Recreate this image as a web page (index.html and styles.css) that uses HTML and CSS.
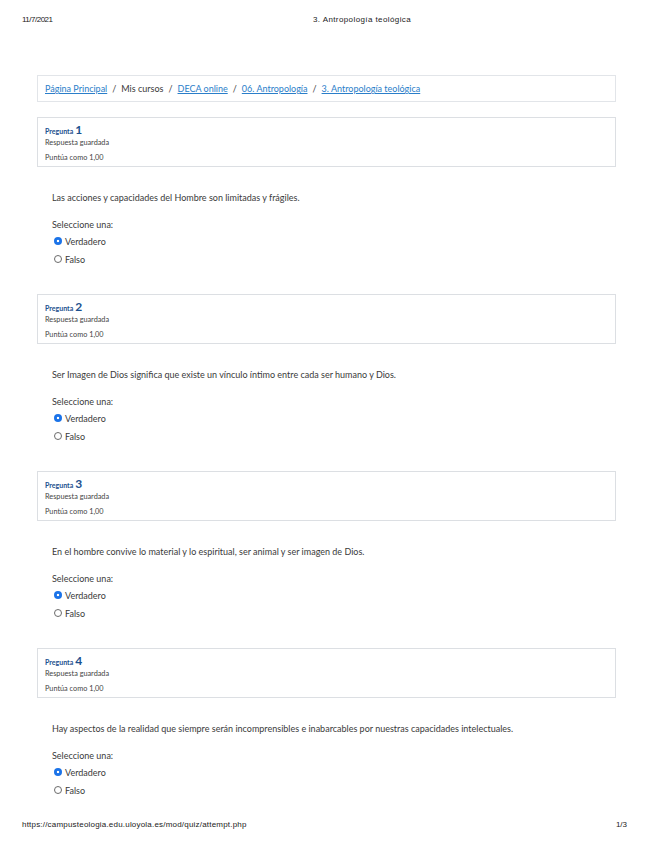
FILE: index.html
```html
<!DOCTYPE html>
<html lang="es">
<head>
<meta charset="utf-8">
<title>3. Antropología teológica</title>
<link rel="stylesheet" href="styles.css">
</head>
<body>
<header class="print-head">
  <span class="print-date">11/7/2021</span>
  <span class="print-title">3. Antropología teológica</span>
</header>

<main class="page">
  <nav class="breadcrumb">
    <a href="#">Página Principal</a><span class="sep">/</span>
    <span>Mis cursos</span><span class="sep">/</span>
    <a href="#">DECA online</a><span class="sep">/</span>
    <a href="#">06. Antropología</a><span class="sep">/</span>
    <a href="#">3. Antropología teológica</a>
  </nav>

  <section class="que">
    <div class="info">
      <div class="qno"><span class="qlabel">Pregunta</span><span class="qnum">1</span></div>
      <div class="state">Respuesta guardada</div>
      <div class="grade">Puntúa como 1,00</div>
    </div>
    <div class="content">
      <p class="qtext">Las acciones y capacidades del Hombre son limitadas y frágiles.</p>
      <p class="prompt">Seleccione una:</p>
      <div class="opt"><span class="radio checked"></span>Verdadero</div>
      <div class="opt"><span class="radio"></span>Falso</div>
    </div>
  </section>

  <section class="que">
    <div class="info">
      <div class="qno"><span class="qlabel">Pregunta</span><span class="qnum">2</span></div>
      <div class="state">Respuesta guardada</div>
      <div class="grade">Puntúa como 1,00</div>
    </div>
    <div class="content">
      <p class="qtext">Ser Imagen de Dios significa que existe un vínculo íntimo entre cada ser humano y Dios.</p>
      <p class="prompt">Seleccione una:</p>
      <div class="opt"><span class="radio checked"></span>Verdadero</div>
      <div class="opt"><span class="radio"></span>Falso</div>
    </div>
  </section>

  <section class="que">
    <div class="info">
      <div class="qno"><span class="qlabel">Pregunta</span><span class="qnum">3</span></div>
      <div class="state">Respuesta guardada</div>
      <div class="grade">Puntúa como 1,00</div>
    </div>
    <div class="content">
      <p class="qtext">En el hombre convive lo material y lo espiritual, ser animal y ser imagen de Dios.</p>
      <p class="prompt">Seleccione una:</p>
      <div class="opt"><span class="radio checked"></span>Verdadero</div>
      <div class="opt"><span class="radio"></span>Falso</div>
    </div>
  </section>

  <section class="que">
    <div class="info">
      <div class="qno"><span class="qlabel">Pregunta</span><span class="qnum">4</span></div>
      <div class="state">Respuesta guardada</div>
      <div class="grade">Puntúa como 1,00</div>
    </div>
    <div class="content">
      <p class="qtext">Hay aspectos de la realidad que siempre serán incomprensibles e inabarcables por nuestras capacidades intelectuales.</p>
      <p class="prompt">Seleccione una:</p>
      <div class="opt"><span class="radio checked"></span>Verdadero</div>
      <div class="opt"><span class="radio"></span>Falso</div>
    </div>
  </section>
</main>

<footer class="print-foot">
  <span class="print-url">https://campusteologia.edu.uloyola.es/mod/quiz/attempt.php</span>
  <span class="print-page">1/3</span>
</footer>
</body>
</html>
```

FILE: styles.css
```css
html, body {
  margin: 0;
  padding: 0;
  background: #fff;
}

body {
  width: 655px;
  height: 848px;
  position: relative;
  overflow: hidden;
  font-family: Lato, "Open Sans", sans-serif;
  color: #3a3a3a;
}

.print-head {
  display: flex;
  height: 40px;
  padding: 14px 0 0 22px;
  box-sizing: border-box;
  font-family: "Liberation Sans Narrow", "Liberation Sans", Arial, sans-serif;
  font-size: 8px;
  line-height: 12px;
  color: #222;
}

.print-date {
  width: 291px;
  letter-spacing: -0.5px;
}

.print-title {
  letter-spacing: 0.4px;
}

.page {
  margin: 35px 0 0 37px;
  width: 579px;
}

.breadcrumb {
  height: 27px;
  box-sizing: border-box;
  border: 1px solid #e2e5e9;
  padding: 0 7px;
  display: flex;
  align-items: center;
  font-size: 9px;
  color: #3a3a3a;
}

.breadcrumb a {
  color: #2a7ec9;
  text-decoration: underline;
  text-underline-offset: 1px;
}

.breadcrumb .sep {
  margin: 0 5px;
  color: #444;
}

.que {
  margin-top: 15px;
}

.que + .que {
  margin-top: 27px;
}

.info {
  height: 50px;
  box-sizing: border-box;
  border: 1px solid #dcdfe3;
  padding: 3px 7px 0;
}

.qno {
  height: 14px;
  line-height: 14px;
  color: #1b4f8e;
  font-weight: 700;
}

.qlabel {
  font-size: 7px;
}

.qnum {
  font-size: 12px;
  margin-left: 2px;
}

.state {
  margin-top: 2px;
  font-size: 7.3px;
  line-height: 12px;
  color: #444;
}

.grade {
  margin-top: 3px;
  font-size: 7.3px;
  line-height: 12px;
  color: #444;
}

.content {
  padding-left: 15px;
}

.qtext {
  margin: 25px 0 0;
  font-size: 9px;
  line-height: 12px;
}

.prompt {
  margin: 15px 0 0;
  font-size: 9px;
  line-height: 12px;
}

.opt {
  margin-top: 2px;
  height: 16px;
  display: flex;
  align-items: center;
  font-size: 9px;
  padding-left: 2px;
}

.radio {
  width: 8px;
  height: 8px;
  box-sizing: border-box;
  border-radius: 50%;
  border: 1px solid #6b6b6b;
  margin-right: 3px;
  background: #fff;
}

.radio.checked {
  border: none;
  background: radial-gradient(circle, #fff 0 1.3px, #1b73e8 1.6px);
}

.print-foot {
  position: absolute;
  left: 0;
  top: 819px;
  width: 655px;
  display: flex;
  justify-content: space-between;
  padding: 0 28px 0 22px;
  box-sizing: border-box;
  font-family: "Liberation Sans Narrow", "Liberation Sans", Arial, sans-serif;
  font-size: 8px;
  line-height: 12px;
  color: #222;
}

.print-url {
  letter-spacing: 0.2px;
}
```
